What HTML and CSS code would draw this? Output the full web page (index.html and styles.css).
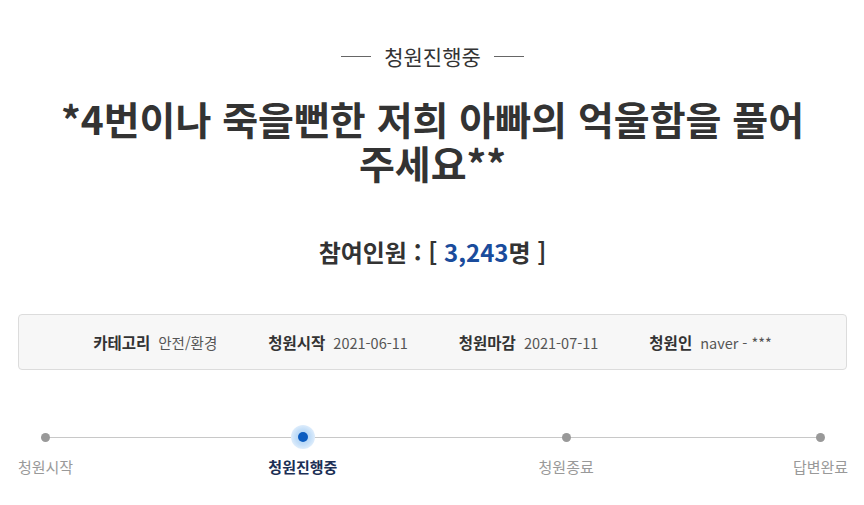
FILE: index.html
```html
<!DOCTYPE html>
<html lang="ko">
<head>
<meta charset="utf-8">
<link rel="stylesheet" href="styles.css">
</head>
<body>
<div class="page">
  <div class="status"><span class="status-line"></span><span class="status-text">청원진행중</span><span class="status-line"></span></div>
  <h1 class="title">*4번이나 죽을뻔한 저희 아빠의 억울함을 풀어 주세요**</h1>
  <div class="count">참여인원 : [ <span class="count-num">3,243</span>명 ]</div>
  <ul class="info">
    <li class="info-item"><strong class="info-label">카테고리</strong><span class="info-value">안전/환경</span></li>
    <li class="info-item"><strong class="info-label">청원시작</strong><span class="info-value">2021-06-11</span></li>
    <li class="info-item"><strong class="info-label">청원마감</strong><span class="info-value">2021-07-11</span></li>
    <li class="info-item"><strong class="info-label">청원인</strong><span class="info-value">naver - ***</span></li>
  </ul>
  <ol class="steps">
    <li class="step"><span class="dot"></span><span class="step-label">청원시작</span></li>
    <li class="step active"><span class="dot"></span><span class="step-label">청원진행중</span></li>
    <li class="step"><span class="dot"></span><span class="step-label">청원종료</span></li>
    <li class="step"><span class="dot"></span><span class="step-label">답변완료</span></li>
  </ol>
</div>
</body>
</html>
```
FILE: styles.css
```css
* { box-sizing: border-box; }
html, body { margin: 0; padding: 0; background: #fff; }
body {
  font-family: "Noto Sans CJK KR", "Noto Sans", sans-serif;
  color: #333;
}
.page { padding: 0 17px 0 18px; }

.status {
  margin-top: 42px;
  display: flex;
  justify-content: center;
  align-items: center;
  gap: 13px;
  font-size: 21px;
  line-height: 28px;
  color: #333;
}
.status-line { width: 30px; height: 1px; background: #666; }

.title {
  margin: 26px auto 0;
  max-width: 790px;
  font-size: 39px;
  line-height: 44px;
  font-weight: 700;
  text-align: center;
  color: #333;
  word-break: keep-all;
}

.count {
  margin-top: 51px;
  text-align: center;
  font-size: 24px;
  line-height: 34px;
  font-weight: 700;
  color: #333;
}
.count-num { color: #1a4c9c; }

.info {
  list-style: none;
  margin: 45px 0 0;
  padding: 0;
  height: 56px;
  background: #f7f7f7;
  border: 1px solid #dcdcdc;
  border-radius: 4px;
  display: flex;
  justify-content: center;
  align-items: center;
  gap: 51px;
}
.info-item { display: flex; align-items: center; gap: 8px; }
.info-label { font-weight: 700; color: #333; font-size: 15.5px; }
.info-value { color: #555; font-size: 14.5px; }

.steps {
  list-style: none;
  margin: 55px 0 0;
  padding: 0;
  display: flex;
  justify-content: space-between;
  position: relative;
  width: 830px;
}
.steps::before {
  content: "";
  position: absolute;
  left: 27px;
  right: 27px;
  top: 12px;
  height: 1px;
  background: #c8c8c8;
}
.step {
  width: 55px;
  display: flex;
  flex-direction: column;
  align-items: center;
  position: relative;
}
.step:nth-child(2) { margin-left: -6px; }
.step:nth-child(3) { margin-right: -9px; }
.dot {
  width: 24px;
  height: 24px;
  display: flex;
  align-items: center;
  justify-content: center;
  position: relative;
}
.dot::after {
  content: "";
  width: 9px;
  height: 9px;
  border-radius: 50%;
  background: #999;
}
.step.active .dot {
  border-radius: 50%;
  background: radial-gradient(circle, #a9cff4 0%, #c3def8 45%, #e2effc 75%, rgba(235,244,253,0.6) 100%);
}
.step.active .dot::after { background: #0b5cc0; width: 10px; height: 10px; }
.step-label {
  margin-top: 7px;
  font-size: 15px;
  line-height: 22px;
  color: #999;
  white-space: nowrap;
}
.step.active .step-label { color: #1c2f55; font-weight: 700; }
```
